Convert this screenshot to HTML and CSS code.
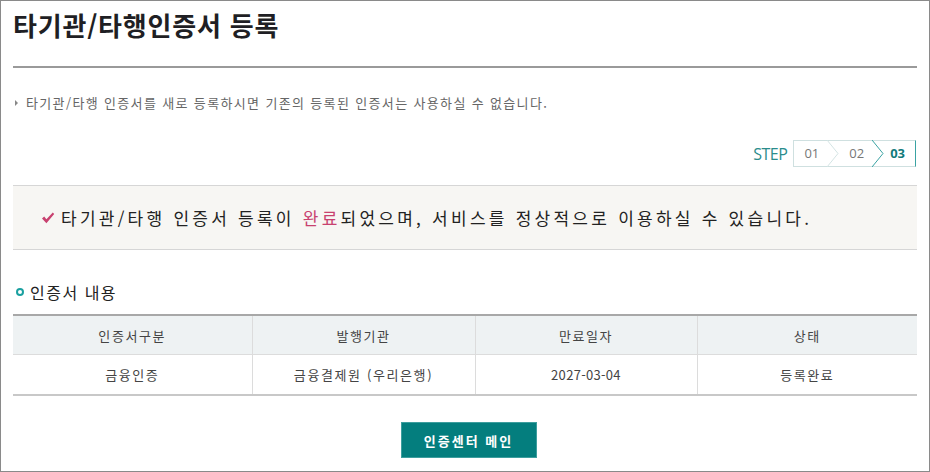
FILE: index.html
```html
<!DOCTYPE html>
<html lang="ko">
<head>
<meta charset="utf-8">
<link rel="stylesheet" href="styles.css">
</head>
<body>
<div class="frame">
  <h1 class="title">타기관/타행인증서 등록</h1>
  <hr class="rule">
  <p class="note"><span class="tri"></span>타기관/타행 인증서를 새로 등록하시면 기존의 등록된 인증서는 사용하실 수 없습니다.</p>
  <div class="steps">
    <span class="step-label">STEP</span>
    <div class="step-box">
      <span class="step">01</span>
      <span class="chev"><svg width="12" height="27" viewBox="0 0 12 27"><path d="M0 0 L11 13.5 L0 27" fill="none" stroke="#d4e4e4" stroke-width="1"/></svg></span>
      <span class="step">02</span>
      <span class="chev"><svg width="12" height="27" viewBox="0 0 12 27"><path d="M0 0 L11 13.5 L0 27" fill="none" stroke="#3aa3a3" stroke-width="1"/></svg></span>
      <span class="step on">03</span>
    </div>
  </div>
  <div class="done">
    <svg class="check" width="14" height="12" viewBox="0 0 14 12"><path d="M1 6.5 L3.2 4.6 L5.4 7.2 L11.8 0.6 L13.2 2 L5.4 11.2 Z" fill="#c8416f"/></svg>
    <span>타기관/타행 인증서 등록이 <em class="pink">완료</em>되었으며, 서비스를 정상적으로 이용하실 수 있습니다.</span>
  </div>
  <h2 class="sec"><span class="ring"></span>인증서 내용</h2>
  <table class="tbl">
    <colgroup><col class="c1"><col class="c2"><col class="c3"><col class="c4"></colgroup>
    <thead>
      <tr><th>인증서구분</th><th>발행기관</th><th>만료일자</th><th>상태</th></tr>
    </thead>
    <tbody>
      <tr><td>금융인증</td><td>금융결제원 (우리은행)</td><td class="num">2027-03-04</td><td>등록완료</td></tr>
    </tbody>
  </table>
  <div class="btns"><button class="btn">인증센터 메인</button></div>
</div>
</body>
</html>
```

FILE: styles.css
```css
html, body { margin: 0; padding: 0; }
body {
  font-family: "Noto Sans CJK KR", "Noto Sans", sans-serif;
  color: #333;
  background: #fff;
}
.frame {
  box-sizing: border-box;
  width: 930px;
  height: 472px;
  border: 1px solid #8a8a8a;
  padding: 0 12px;
  overflow: hidden;
}
.title {
  margin: 0;
  padding-top: 5px;
  font-size: 26px;
  font-weight: 700;
  line-height: 38px;
  color: #1f1f24;
  letter-spacing: 0.8px;
}
.rule {
  margin: 22px 0 0;
  border: 0;
  height: 2px;
  background: #9a9a9a;
}
.note {
  margin: 26px 0 0;
  font-size: 13px;
  line-height: 18px;
  letter-spacing: 1.35px;
  color: #666;
  display: flex;
  align-items: center;
}
.tri {
  width: 0; height: 0;
  border-left: 3px solid #888;
  border-top: 3px solid transparent;
  border-bottom: 3px solid transparent;
  margin: 0 8px 0 2px;
}
.steps {
  margin-top: 28px;
  display: flex;
  justify-content: flex-end;
  align-items: center;
}
.step-label {
  font-family: "Open Sans", sans-serif;
  font-size: 16px;
  color: #2a8c8c;
  letter-spacing: -0.5px;
  margin-right: 6px;
}
.step-box {
  display: flex;
  align-items: stretch;
  height: 27px;
  box-sizing: border-box;
  border: 1px solid #cfe0e0;
  border-right-color: #3aa3a3;
  margin-right: 1px;
}
.step {
  font-family: "Open Sans", sans-serif;
  font-size: 13px;
  color: #777;
  display: flex;
  align-items: center;
  padding: 0 8px 0 10px;
  line-height: 25px;
}
.step.on { color: #117a7a; font-weight: 700; padding: 0 10px 0 6px; }
.chev { display: flex; align-items: center; margin-top: -1px; }
.done {
  margin-top: 18px;
  height: 65px;
  box-sizing: border-box;
  background: #f7f6f3;
  border-top: 1px solid #d6d6d6;
  border-bottom: 1px solid #d6d6d6;
  display: flex;
  align-items: center;
  padding-left: 28px;
  font-size: 17px;
  letter-spacing: 3.25px;
  color: #222;
}
.check { margin-right: 6px; margin-top: 1px; }
.pink { font-style: normal; color: #c8416f; }
.sec {
  margin: 29px 0 0;
  font-size: 16px;
  font-weight: 400;
  line-height: 26px;
  letter-spacing: 1.5px;
  color: #222;
  display: flex;
  align-items: center;
}
.ring {
  width: 4px; height: 4px;
  border: 2px solid #1aa0a0;
  border-radius: 50%;
  margin: 0 6px 0 3px;
}
.tbl {
  margin-top: 9px;
  width: 100%;
  table-layout: fixed;
  border-collapse: collapse;
  border-top: 2px solid #a8a8a8;
  border-bottom: 2px solid #c8c8c8;
  font-size: 13px;
  letter-spacing: 1.6px;
  color: #444;
}
.c1 { width: 239px; }
.c2 { width: 223px; }
.c3 { width: 222px; }
.tbl th {
  background: #eef2f3;
  font-weight: 400;
  height: 38px;
  border-bottom: 1px solid #dcdcdc;
  border-left: 1px solid #dcdcdc;
  padding: 0;
}
.tbl td {
  height: 39px;
  text-align: center;
  border-left: 1px solid #dcdcdc;
  padding: 0;
}
.tbl td.num { letter-spacing: 0.3px; }
.tbl th:first-child, .tbl td:first-child { border-left: 0; }
.btns {
  margin-top: 26px;
  display: flex;
  justify-content: center;
}
.btn {
  width: 136px;
  height: 36px;
  background: #047e7e;
  color: #fff;
  border: 1px solid #3d9e9e;
  font-family: inherit;
  font-size: 13px;
  font-weight: 700;
  letter-spacing: 2px;
  cursor: pointer;
  margin-left: 7px;
}
```
